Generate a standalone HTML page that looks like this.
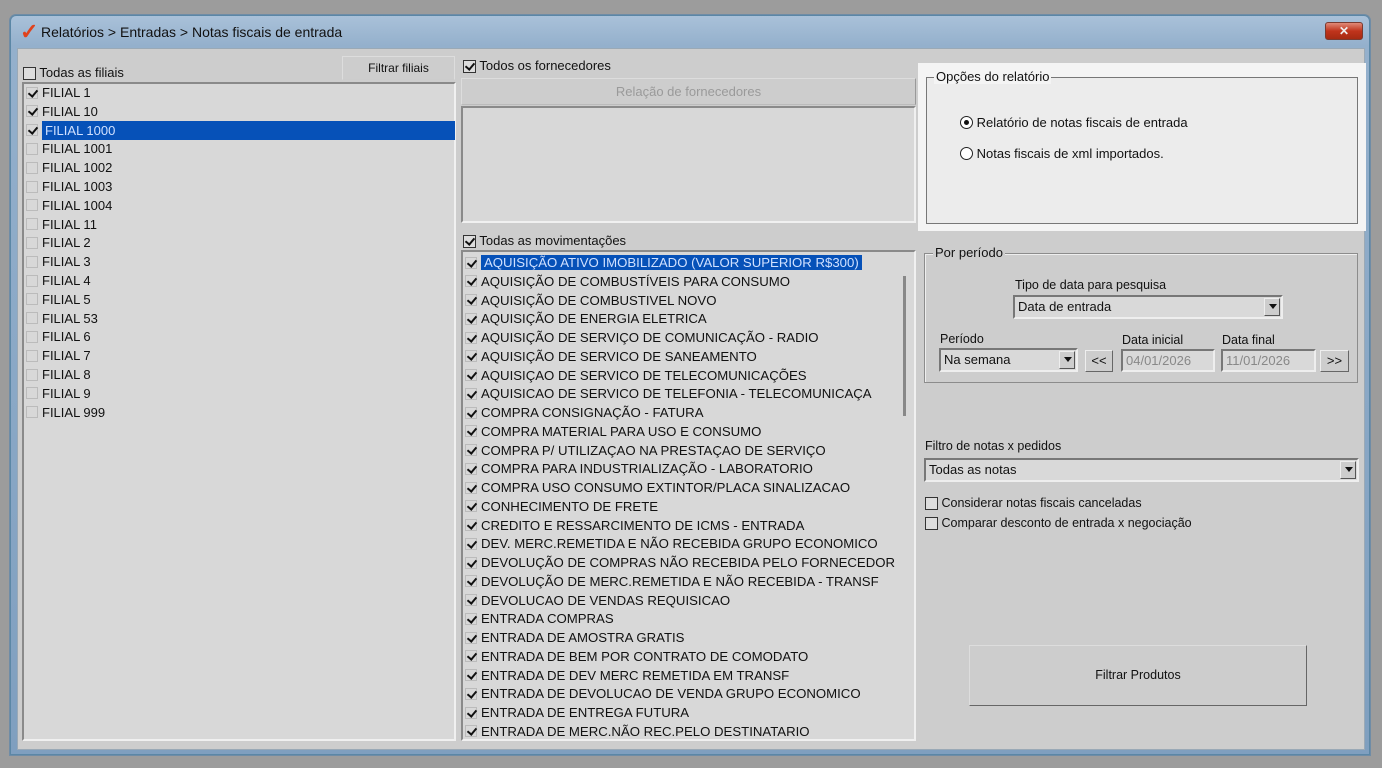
<!DOCTYPE html>
<html><head><meta charset="utf-8"><style>
*{box-sizing:border-box;margin:0;padding:0}
body{width:1382px;height:768px;background:#9c9c9c;font-family:"Liberation Sans",sans-serif;font-size:13px;color:#111;position:relative;overflow:hidden}
.a{position:absolute}
.win{left:10px;top:15px;width:1360px;height:740px;border:1px solid #5b87a6;border-radius:6px 6px 0 0;background:linear-gradient(#a9c1d9,#94b0cc 30px,#7f9fbf);box-shadow:0 0 0 1px #6f8ca6}
.content{left:17px;top:48px;width:1348px;height:702px;background:#cdcdcd;border:1px solid #9aa9b6}
.list{background:#d8d8d8;border:2px solid;border-color:#8a8a8a #f0f0f0 #f0f0f0 #8a8a8a}
.cb{display:inline-block;width:12px;height:12px;position:relative;vertical-align:middle;border:1px solid #bbb}
.row{position:absolute;left:2px;height:19px;line-height:19px;white-space:nowrap}
.row .cb{margin-right:4px;top:-1px}
.chk::after{content:"";position:absolute;left:3px;top:0px;width:4px;height:7px;border:solid #111;border-width:0 2px 2px 0;transform:rotate(40deg)}
.box{border:1px solid #333;background:#ddd;width:13px;height:13px}
.sel{background:#0651b8;color:#cfe0ff;padding:0 3px}
.btn{background:#cdcdcd;border:1px solid;border-color:#eee #666 #666 #eee;text-align:center}
.grp{border:1px solid #8c8c8c;box-shadow:1px 1px 0 #eee inset}
.lgd{background:#cdcdcd;padding:0 2px}
.combo{background:#d9d9d9;border:2px solid;border-color:#777 #eee #eee #777;padding-left:3px;line-height:16px}
.arr{position:absolute;right:1px;top:1px;width:16px;bottom:1px;background:#cdcdcd;border:1px solid;border-color:#eee #555 #555 #eee}
.arr::after{content:"";position:absolute;left:4px;top:5px;border:4px solid transparent;border-top:5px solid #111}
.mv{font-size:13.2px}
</style></head><body>
<div class="a win"></div>
<div class="a" style="left:20px;top:19px;font-size:22px;color:#e0421c;font-weight:bold">✓</div>
<div class="a" style="left:41px;top:24px;font-size:14px;color:#111">Relatórios &gt; Entradas &gt; Notas fiscais de entrada</div>
<div class="a" style="left:1325px;top:22px;width:38px;height:18px;border-radius:3px;background:linear-gradient(#e08a78,#c0341c 50%,#a52a12);border:1px solid #7a3a30;color:#eee;text-align:center;font-size:12px;line-height:16px;font-weight:bold">✕</div>
<div class="a content"></div>

<!-- left -->
<div class="a" style="left:23px;top:65px"><span class="cb box"></span> Todas as filiais</div>
<div class="a btn" style="left:342px;top:56px;width:113px;height:24px;line-height:22px;font-size:12px;border-color:#ddd #ddd #ccc #ddd">Filtrar filiais</div>
<div class="a list" style="left:22px;top:82px;width:434px;height:659px">
<div class="row" style="top:-1px"><span class="cb chk"></span>FILIAL 1</div>
<div class="row" style="top:17.8px"><span class="cb chk"></span>FILIAL 10</div>
<div class="row" style="top:36.6px;width:428px"><span class="cb chk"></span><span class="sel" style="display:inline-block;width:413px">FILIAL 1000</span></div>
<div class="row" style="top:55.4px"><span class="cb"></span>FILIAL 1001</div>
<div class="row" style="top:74.2px"><span class="cb"></span>FILIAL 1002</div>
<div class="row" style="top:93px"><span class="cb"></span>FILIAL 1003</div>
<div class="row" style="top:111.8px"><span class="cb"></span>FILIAL 1004</div>
<div class="row" style="top:130.6px"><span class="cb"></span>FILIAL 11</div>
<div class="row" style="top:149.4px"><span class="cb"></span>FILIAL 2</div>
<div class="row" style="top:168.2px"><span class="cb"></span>FILIAL 3</div>
<div class="row" style="top:187px"><span class="cb"></span>FILIAL 4</div>
<div class="row" style="top:205.8px"><span class="cb"></span>FILIAL 5</div>
<div class="row" style="top:224.6px"><span class="cb"></span>FILIAL 53</div>
<div class="row" style="top:243.4px"><span class="cb"></span>FILIAL 6</div>
<div class="row" style="top:262.2px"><span class="cb"></span>FILIAL 7</div>
<div class="row" style="top:281px"><span class="cb"></span>FILIAL 8</div>
<div class="row" style="top:299.8px"><span class="cb"></span>FILIAL 9</div>
<div class="row" style="top:318.6px"><span class="cb"></span>FILIAL 999</div>
</div>

<!-- middle -->
<div class="a" style="left:463px;top:58px"><span class="cb box chk"></span> Todos os fornecedores</div>
<div class="a btn" style="left:461px;top:78px;width:455px;height:27px;line-height:25px;color:#9a9a9a;border-color:#ddd #999 #bbb #ddd">Relação de fornecedores</div>
<div class="a list" style="left:461px;top:106px;width:455px;height:117px"></div>
<div class="a" style="left:463px;top:233px"><span class="cb box chk"></span> Todas as movimentações</div>
<div class="a list mv" style="left:461px;top:250px;width:455px;height:491px;overflow:hidden">
<div class="a" style="left:440px;top:24px;width:3px;height:140px;background:#888"></div>
<div class="row" style="top:1px"><span class="cb chk"></span><span class="sel">AQUISIÇÃO ATIVO IMOBILIZADO (VALOR SUPERIOR R$300)</span></div>
<div class="row" style="top:19.75px"><span class="cb chk"></span>AQUISIÇÃO DE COMBUSTÍVEIS PARA CONSUMO</div>
<div class="row" style="top:38.5px"><span class="cb chk"></span>AQUISIÇÃO DE COMBUSTIVEL NOVO</div>
<div class="row" style="top:57.25px"><span class="cb chk"></span>AQUISIÇÃO DE ENERGIA ELETRICA</div>
<div class="row" style="top:76px"><span class="cb chk"></span>AQUISIÇÃO DE SERVIÇO DE COMUNICAÇÃO - RADIO</div>
<div class="row" style="top:94.75px"><span class="cb chk"></span>AQUISIÇÃO DE SERVICO DE SANEAMENTO</div>
<div class="row" style="top:113.5px"><span class="cb chk"></span>AQUISIÇAO DE SERVICO DE TELECOMUNICAÇÕES</div>
<div class="row" style="top:132.25px"><span class="cb chk"></span>AQUISICAO DE SERVICO DE TELEFONIA - TELECOMUNICAÇA</div>
<div class="row" style="top:151px"><span class="cb chk"></span>COMPRA CONSIGNAÇÃO - FATURA</div>
<div class="row" style="top:169.75px"><span class="cb chk"></span>COMPRA MATERIAL PARA USO E CONSUMO</div>
<div class="row" style="top:188.5px"><span class="cb chk"></span>COMPRA P/ UTILIZAÇAO NA PRESTAÇAO DE SERVIÇO</div>
<div class="row" style="top:207.25px"><span class="cb chk"></span>COMPRA PARA INDUSTRIALIZAÇÃO - LABORATORIO</div>
<div class="row" style="top:226px"><span class="cb chk"></span>COMPRA USO CONSUMO EXTINTOR/PLACA SINALIZACAO</div>
<div class="row" style="top:244.75px"><span class="cb chk"></span>CONHECIMENTO DE FRETE</div>
<div class="row" style="top:263.5px"><span class="cb chk"></span>CREDITO E RESSARCIMENTO DE ICMS - ENTRADA</div>
<div class="row" style="top:282.25px"><span class="cb chk"></span>DEV. MERC.REMETIDA E NÃO RECEBIDA GRUPO ECONOMICO</div>
<div class="row" style="top:301px"><span class="cb chk"></span>DEVOLUÇÃO DE COMPRAS NÃO RECEBIDA PELO FORNECEDOR</div>
<div class="row" style="top:319.75px"><span class="cb chk"></span>DEVOLUÇÃO DE MERC.REMETIDA E NÃO RECEBIDA - TRANSF</div>
<div class="row" style="top:338.5px"><span class="cb chk"></span>DEVOLUCAO DE VENDAS REQUISICAO</div>
<div class="row" style="top:357.25px"><span class="cb chk"></span>ENTRADA COMPRAS</div>
<div class="row" style="top:376px"><span class="cb chk"></span>ENTRADA DE AMOSTRA GRATIS</div>
<div class="row" style="top:394.75px"><span class="cb chk"></span>ENTRADA DE BEM POR CONTRATO DE COMODATO</div>
<div class="row" style="top:413.5px"><span class="cb chk"></span>ENTRADA DE DEV MERC REMETIDA EM TRANSF</div>
<div class="row" style="top:432.25px"><span class="cb chk"></span>ENTRADA DE DEVOLUCAO DE VENDA GRUPO ECONOMICO</div>
<div class="row" style="top:451px"><span class="cb chk"></span>ENTRADA DE ENTREGA FUTURA</div>
<div class="row" style="top:469.75px"><span class="cb chk"></span>ENTRADA DE MERC.NÃO REC.PELO DESTINATARIO</div>
</div>

<!-- options -->
<div class="a" style="left:918px;top:63px;width:448px;height:168px;background:#f4f4f4"></div>
<div class="a" style="left:926px;top:77px;width:432px;height:147px;border:1px solid #777;background:#ececec"></div>
<div class="a" style="left:934px;top:69px;background:#f4f4f4;padding:0 2px">Opções do relatório</div>
<div class="a" style="left:960px;top:115px;line-height:16px"><span style="display:inline-block;width:13px;height:13px;border:1px solid #222;border-radius:50%;vertical-align:-2px;position:relative;background:#fff"><span style="position:absolute;left:3px;top:3px;width:5px;height:5px;border-radius:50%;background:#111"></span></span> Relatório de notas fiscais de entrada</div>
<div class="a" style="left:960px;top:146px;line-height:16px"><span style="display:inline-block;width:13px;height:13px;border:1px solid #222;border-radius:50%;vertical-align:-2px;background:#fff"></span> Notas fiscais de xml importados.</div>

<!-- period -->
<div class="a grp" style="left:924px;top:253px;width:434px;height:130px"></div>
<div class="a lgd" style="left:933px;top:245px">Por período</div>
<div class="a" style="left:1015px;top:278px;font-size:12.5px">Tipo de data para pesquisa</div>
<div class="a combo" style="left:1013px;top:295px;width:270px;height:24px;line-height:20px">Data de entrada<span class="arr"></span></div>
<div class="a" style="left:940px;top:332px;font-size:12.5px">Período</div>
<div class="a combo" style="left:939px;top:348px;width:139px;height:24px;line-height:20px">Na semana<span class="arr"></span></div>
<div class="a btn" style="left:1085px;top:350px;width:28px;height:22px;line-height:20px">&lt;&lt;</div>
<div class="a" style="left:1122px;top:333px;font-size:12.5px">Data inicial</div>
<div class="a combo" style="left:1121px;top:349px;width:94px;height:23px;line-height:19px;color:#888">04/01/2026</div>
<div class="a" style="left:1222px;top:333px;font-size:12.5px">Data final</div>
<div class="a combo" style="left:1221px;top:349px;width:95px;height:23px;line-height:19px;color:#888">11/01/2026</div>
<div class="a btn" style="left:1320px;top:350px;width:29px;height:22px;line-height:20px">&gt;&gt;</div>

<div class="a" style="left:925px;top:439px;font-size:12.5px">Filtro de notas x pedidos</div>
<div class="a combo" style="left:924px;top:458px;width:435px;height:24px;line-height:20px">Todas as notas<span class="arr"></span></div>
<div class="a" style="left:925px;top:496px;font-size:12.5px"><span class="cb box"></span> Considerar notas fiscais canceladas</div>
<div class="a" style="left:925px;top:516px;font-size:12.5px"><span class="cb box"></span> Comparar desconto de entrada x negociação</div>

<div class="a btn" style="left:969px;top:645px;width:338px;height:61px;line-height:59px;font-size:12.5px;border-color:#ddd #666 #666 #ddd">Filtrar Produtos</div>
</body></html>
